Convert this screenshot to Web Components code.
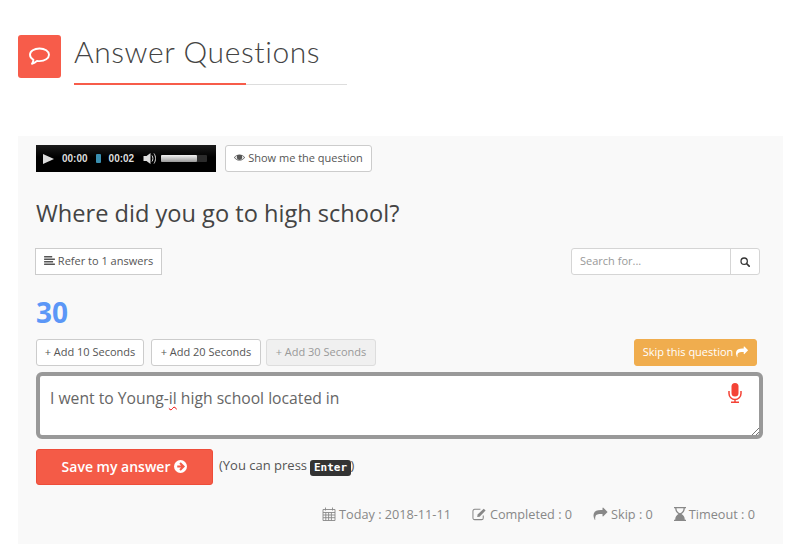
<!DOCTYPE html>
<html><head><meta charset="utf-8">
<style>
html,body{margin:0;padding:0;background:#fff;font-family:"Open Sans","Noto Sans",sans-serif;}
</style></head>
<body>
<answer-page></answer-page>
<script>
const SHARE='M1792 640q0 26-19 45l-512 512q-19 19-45 19t-45-19-19-45v-256h-224q-98 0-175.5 6t-154 21.5-133 42.5-105.5 69.5-80 101-48.5 138.5-17.5 181q0 55 5 123 0 6 2.5 23.5t2.5 26.5q0 15-8.5 25t-23.5 10q-16 0-28-17-7-9-13-22t-13.5-30-10.5-24q-127-285-127-451 0-199 53-333 162-403 875-403h224v-256q0-26 19-45t45-19 45 19l512 512q19 19 19 45z';
const ICONS={
 share:`<svg viewBox="0 0 1792 1792" width="100%" height="100%"><path fill="currentColor" d="${SHARE}"/></svg>`,
 eye:`<svg viewBox="0 0 16 16" width="100%" height="100%"><path fill="currentColor" fill-rule="evenodd" d="M0 8c2-3 4.800-4.500 8-4.500S14 5 16 8c-2 3-4.800 4.500-8 4.500S2 11 0 8zm1.400 0c1.600 2.200 3.900 3.400 6.600 3.400s5-1.200 6.600-3.400c-.9-1.300-2-2.200-3.300-2.800.5.600.7 1.400.7 2.200a4 4 0 0 1-8 0c0-.8.200-1.600.7-2.200C3.400 5.800 2.300 6.700 1.400 8z"/></svg>`,
 lines:`<svg viewBox="0 0 12 10" width="100%" height="100%"><path fill="currentColor" d="M0 0h9v1.600H0zM0 2.800h12v1.600H0zM0 5.600h10v1.600H0zM0 8.400h12V10H0z"/></svg>`,
 search:`<svg viewBox="0 0 12 12" width="100%" height="100%"><circle cx="5" cy="5" r="3.800" fill="none" stroke="currentColor" stroke-width="1.500"/><path d="M7.800 7.800L11 11" stroke="currentColor" stroke-width="2" stroke-linecap="round"/></svg>`,
 mic:`<svg viewBox="0 0 14 20" width="100%" height="100%"><rect x="3.500" y="0" width="7" height="13.500" rx="3.500" fill="currentColor"/><path d="M1 8v2.500a6 6 0 0 0 12 0V8M7 16.500V19M3 19.300h8" fill="none" stroke="currentColor" stroke-width="1.500"/></svg>`,
 circle:`<svg viewBox="0 0 14 14" width="100%" height="100%"><circle cx="7" cy="7" r="7" fill="currentColor"/><path d="M6.500 3.200L10.300 7 6.500 10.800M10 7H3.500" fill="none" stroke="#f45b47" stroke-width="2.200"/></svg>`,
 cal:`<svg viewBox="0 0 14 14" width="100%" height="100%"><path d="M1 2.500h12V13.500H1zM1 5.500h12M1 8h12M1 10.700h12M3.800 5.500v8M6.600 5.500v8M9.400 5.500v8M3.500 .5v3M10.500 .5v3" fill="none" stroke="currentColor" stroke-width=".9"/></svg>`,
 edit:`<svg viewBox="0 0 16 14" width="100%" height="100%"><path d="M12 8.500v2.700A1.800 1.800 0 0 1 10.200 13H2.800A1.800 1.800 0 0 1 1 11.200V3.800A1.800 1.800 0 0 1 2.800 2H9" fill="none" stroke="currentColor" stroke-width="1.100"/><path fill="currentColor" d="M6 7.500L12.500 1.300l2 2-6.400 6.600-2.600.3z"/></svg>`,
 glass:`<svg viewBox="0 0 12 14" width="100%" height="100%"><path fill="currentColor" fill-rule="evenodd" d="M0 0h12v1.300h-1.200c0 2.800-1.300 4.600-3.300 5.700 2 1.100 3.300 2.900 3.300 5.700H12V14H0v-1.300h1.200c0-2.800 1.300-4.600 3.300-5.700-2-1.100-3.300-2.900-3.300-5.700H0zM2.500 1.300c0 2.400 1.200 4 3.500 5 2.300-1 3.500-2.600 3.500-5z"/><path fill="currentColor" d="M2.700 12.800c.3-1.800 1.700-3 3.300-3.800 1.600.8 3 2 3.300 3.800z"/></svg>`
};
function def(name,css,html,setup){
  customElements.define(name,class extends HTMLElement{
    connectedCallback(){
      if(this.shadowRoot)return;
      const r=this.attachShadow({mode:'open'});
      r.innerHTML=`<style>${css}</style>${typeof html==='function'?html(this):html}`;
      if(setup)setup(this,r);
    }
  });
}
def('fa-icon',':host{display:inline-block;vertical-align:middle;line-height:0}',h=>ICONS[h.getAttribute('name')]);

def('page-header',`
 :host{display:flex;height:136px;box-sizing:border-box;padding:35px 0 0 18px;gap:13px;align-items:flex-start}
 .box{width:43px;height:43px;border-radius:3px;background:#f75c4a;display:flex;align-items:center;justify-content:center}
 h1{margin:-2px 0 0;font:300 30px/36px Lato,"Open Sans",sans-serif;color:#444;letter-spacing:.6px}
 .rule{margin-top:15px;width:273px;height:1px;background:#ddd;position:relative}
 .rule i{display:block;width:172px;height:2px;background:#f75c4a;position:absolute;left:0;top:-1px}
`,`<div class="box"><svg width="25" height="22" viewBox="0 0 25 22"><path d="M12.500 2.500c5.300 0 9.500 2.700 9.500 6.300s-4.200 6.300-9.500 6.300c-.9 0-1.700-.1-2.500-.2-1.300 1.300-2.800 2.300-5 2.800.8-1.100 1.300-2.200 1.400-3.900C4.500 12.700 3 10.900 3 8.800c0-3.600 4.200-6.300 9.500-6.300z" fill="none" stroke="#fff" stroke-width="1.900" stroke-linejoin="round"/></svg></div>
 <div><h1>Answer Questions</h1><div class="rule"><i></i></div></div>`);

def('audio-player',`
 :host{display:flex;width:180px;height:27px;box-sizing:border-box;align-items:center;background:linear-gradient(#1c1c1c,#000 45%,#000);color:#ddd;font:bold 10px "Liberation Sans",sans-serif;padding-left:7px}
 .play{width:0;height:0;border-left:11px solid #ddd;border-top:5.500px solid transparent;border-bottom:5.500px solid transparent;margin-right:8px}
 .cue{width:5px;height:9px;background:#3a8fb0;border-radius:1px;margin:0 8px}
 .vol{margin:0 4px 0 9px;display:block}
 .bar{width:46px;height:7px;background:#2b2b2b;border-radius:1px}
 .bar i{display:block;width:36px;height:7px;background:linear-gradient(#f2f2f2,#999);border-radius:1px}
`,`<span class="play"></span><span>00:00</span><span class="cue"></span><span>00:02</span>
 <svg class="vol" width="14" height="13" viewBox="0 0 13 13"><path fill="#ddd" d="M0 4h3l4-3v11L3 9H0z"/><path d="M8.500 3.500c1.200 1.800 1.200 4.200 0 6M10.500 1.500c2 3 2 7 0 10" fill="none" stroke="#ddd" stroke-width="1"/></svg>
 <span class="bar"><i></i></span>`);

def('ui-btn',`
 :host{display:inline-flex;align-items:center;justify-content:center;gap:3px;box-sizing:border-box;height:27px;padding:0 0 2px;background:#fff;border:1px solid #ccc;border-radius:3px;color:#555;font:400 11px "Open Sans",sans-serif;white-space:nowrap}
 :host([square]){border-radius:0}
 :host([disabled]){background:#f0f0f0;border-color:#ddd;color:#999}
 :host([warn]){background:#f0ad4e;border-color:#f0ad4e;color:#fff}
 :host([save]){height:36px;background:#f45b47;border-color:#ee4d3a;color:#fff;font-size:14px;font-weight:600;gap:4px}
`,`<slot></slot>`);

def('search-box',`
 :host{display:flex;width:189px;height:27px;box-sizing:border-box;border:1px solid #d5d5d5;border-radius:3px;background:#fff;font:400 11px "Open Sans",sans-serif;color:#999}
 .t{flex:1;display:flex;align-items:center;padding:0 0 2px 8px;border-right:1px solid #d5d5d5}
 .b{width:28px;display:flex;align-items:center;justify-content:center;color:#333}
 fa-icon{width:10px;height:10px}
`,`<div class="t">Search for...</div><div class="b"><fa-icon name="search"></fa-icon></div>`);

def('answer-box',`
 :host{display:block;position:relative;width:727px;height:67px;box-sizing:border-box;border:4px solid #999;border-radius:6px;background:#fff;color:#666;font:400 15.700px/20px "Open Sans",sans-serif}
 .txt{padding:12px 10px}
 u{text-decoration:underline wavy #e00;text-decoration-thickness:1px;text-underline-offset:2px}
 .m{position:absolute;right:17px;top:7px;width:14px;height:20px;color:#f44336}
 .g{position:absolute;right:0;bottom:0;display:block}
`,`<div class="txt">I went to Young-<u>il</u> high school located in</div>
 <fa-icon class="m" name="mic"></fa-icon>
 <svg class="g" width="8" height="8" viewBox="0 0 8 8"><path d="M1 8L8 1M5 8L8 5" stroke="#777" stroke-width="1"/></svg>`);

def('stat-item',`
 :host{display:inline-flex;align-items:center;gap:3px;color:#888;font:400 12.700px "Open Sans",sans-serif;white-space:nowrap}
 ::slotted(fa-icon){height:14px}
`,`<slot></slot>`);

def('key-cap',`:host{display:inline-block;background:#333;color:#fff;font:bold 11px/14px "DejaVu Sans Mono",monospace;padding:1px 3.500px;border-radius:3px;vertical-align:-1px}`,`<slot></slot>`);

def('answer-panel',`
 :host{display:block;width:765px;height:408px;box-sizing:border-box;margin-left:18px;background:#f9f9f9;padding:9px 0 0 18px;color:#444}
 .r{display:flex;align-items:center}
 .top{gap:9px}
 h2{margin:0;font:400 23.600px/32px "Open Sans",sans-serif;color:#444;height:32px;margin-top:25px}
 .refer{justify-content:space-between;margin:19px 23px 0 -1px}
 .num{font:700 28px/36px "Open Sans",sans-serif;color:#5b97f7;margin-top:19px;height:38px}
 .add{margin-top:7px;margin-right:26px}
 .sp{flex:1}
 .ans{margin-top:6px}
 .sv{margin-top:10px;font:400 13px "Open Sans",sans-serif;color:#555}
 .sv span{margin-top:-2px}
 .st{margin-top:20px;justify-content:flex-end;gap:21px;margin-right:28px}
`,`
 <div class="r top"><audio-player></audio-player><ui-btn style="width:147px"><fa-icon name="eye" style="width:11px;height:11px"></fa-icon>Show me the question</ui-btn></div>
 <h2>Where did you go to high school?</h2>
 <div class="r refer"><ui-btn square style="width:127px"><fa-icon name="lines" style="width:11px;height:9px"></fa-icon>Refer to 1 answers</ui-btn><search-box></search-box></div>
 <div class="num">30</div>
 <div class="r add"><ui-btn style="width:108px">+ Add 10 Seconds</ui-btn><ui-btn style="width:110px;margin-left:7px">+ Add 20 Seconds</ui-btn><ui-btn disabled style="width:110px;margin-left:5px">+ Add 30 Seconds</ui-btn><span class="sp"></span><ui-btn warn style="width:123px">Skip this question<fa-icon name="share" style="width:12px;height:12px"></fa-icon></ui-btn></div>
 <div class="ans"><answer-box></answer-box></div>
 <div class="r sv"><ui-btn save style="width:177px;margin-right:6px">Save my answer<fa-icon name="circle" style="width:13px;height:13px"></fa-icon></ui-btn><span>(You can press <key-cap>Enter</key-cap>)</span></div>
 <div class="r st">
  <stat-item><fa-icon name="cal" style="width:14px"></fa-icon>Today : 2018-11-11</stat-item>
  <stat-item><fa-icon name="edit" style="width:15px"></fa-icon>Completed : 0</stat-item>
  <stat-item><fa-icon name="share" style="width:15px"></fa-icon>Skip : 0</stat-item>
  <stat-item><fa-icon name="glass" style="width:12px"></fa-icon>Timeout : 0</stat-item>
 </div>`);

def('answer-page',`:host{display:block;width:800px;height:544px;overflow:hidden}`,`<page-header></page-header><answer-panel></answer-panel>`);
</script>
</body></html>
